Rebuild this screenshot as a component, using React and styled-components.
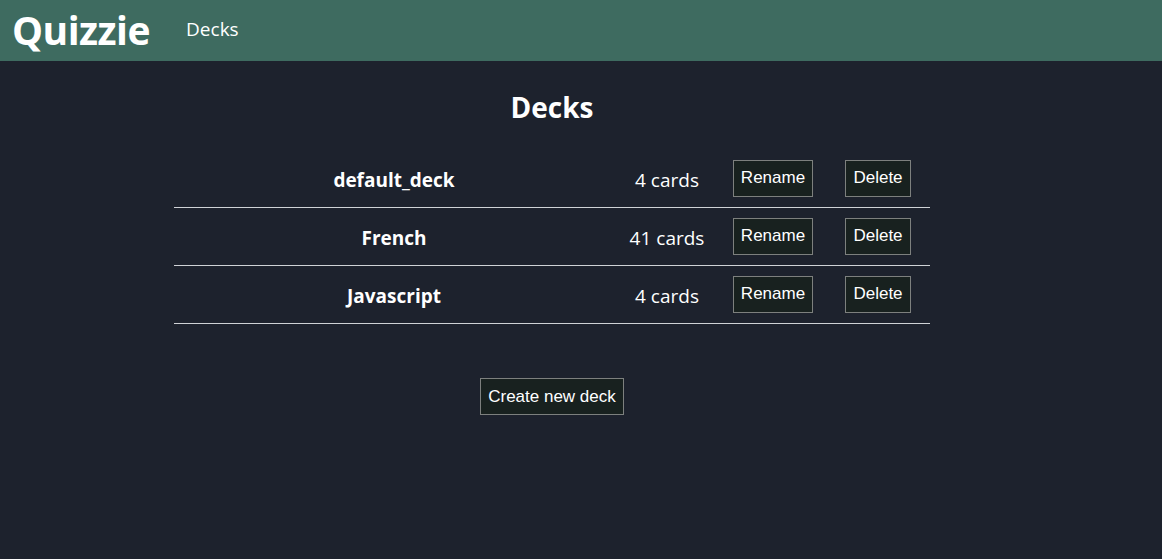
import React from "react";
import styled, { createGlobalStyle } from "styled-components";

const Global = createGlobalStyle`
  html, body { margin: 0; padding: 0; background: #1d222d; }
  body { font-family: "Open Sans", "Noto Sans", sans-serif; color: #fff; min-height: 559px; }
`;

const Header = styled.header`
  height: 61px;
  background: #3e6b60;
  display: flex;
  align-items: center;
  padding-left: 12px;
  gap: 36px;
`;

const Logo = styled.div`
  font-size: 39px;
  font-weight: 700;
  letter-spacing: -0.5px;
  margin-top: -2px;
`;

const NavLink = styled.a`
  font-size: 19px;
  color: #fff;
  text-decoration: none;
  margin-top: -3px;
`;

const Main = styled.main`
  display: flex;
  flex-direction: column;
  align-items: center;
  padding-right: 58px;
`;

const Title = styled.h1`
  font-size: 28px;
  font-weight: 700;
  margin: 28px 0 25px;
  line-height: 36px;
`;

const Table = styled.div`
  width: 756px;
  display: grid;
  grid-template-columns: 440px 106px 106px 104px;
`;

const Row = styled.div`
  display: contents;
`;

const Cell = styled.div`
  height: 58px;
  box-sizing: border-box;
  border-bottom: 1px solid #cfd2d6;
  display: flex;
  align-items: center;
  justify-content: center;
  font-size: 19px;
  font-weight: ${(p) => (p.$bold ? 700 : 400)};
  padding-top: 2px;
`;

const Button = styled.button`
  font-family: "Liberation Sans", Arial, sans-serif;
  font-size: 17px;
  color: #fff;
  background: #18211f;
  border: 1px solid #7d807e;
  height: 37px;
  padding: 0 7px;
  margin-top: -3px;
  cursor: pointer;
`;

const CreateButton = styled(Button)`
  margin-top: 54px;
  padding: 0 7px;
`;

const decks = [
  { name: "default_deck", count: 4 },
  { name: "French", count: 41 },
  { name: "Javascript", count: 4 },
];

export default function App() {
  return (
    <>
      <Global />
      <Header>
        <Logo>Quizzie</Logo>
        <NavLink href="#">Decks</NavLink>
      </Header>
      <Main>
        <Title>Decks</Title>
        <Table>
          {decks.map((d) => (
            <Row key={d.name}>
              <Cell $bold>{d.name}</Cell>
              <Cell>{d.count} cards</Cell>
              <Cell><Button>Rename</Button></Cell>
              <Cell><Button>Delete</Button></Cell>
            </Row>
          ))}
        </Table>
        <CreateButton>Create new deck</CreateButton>
      </Main>
    </>
  );
}
